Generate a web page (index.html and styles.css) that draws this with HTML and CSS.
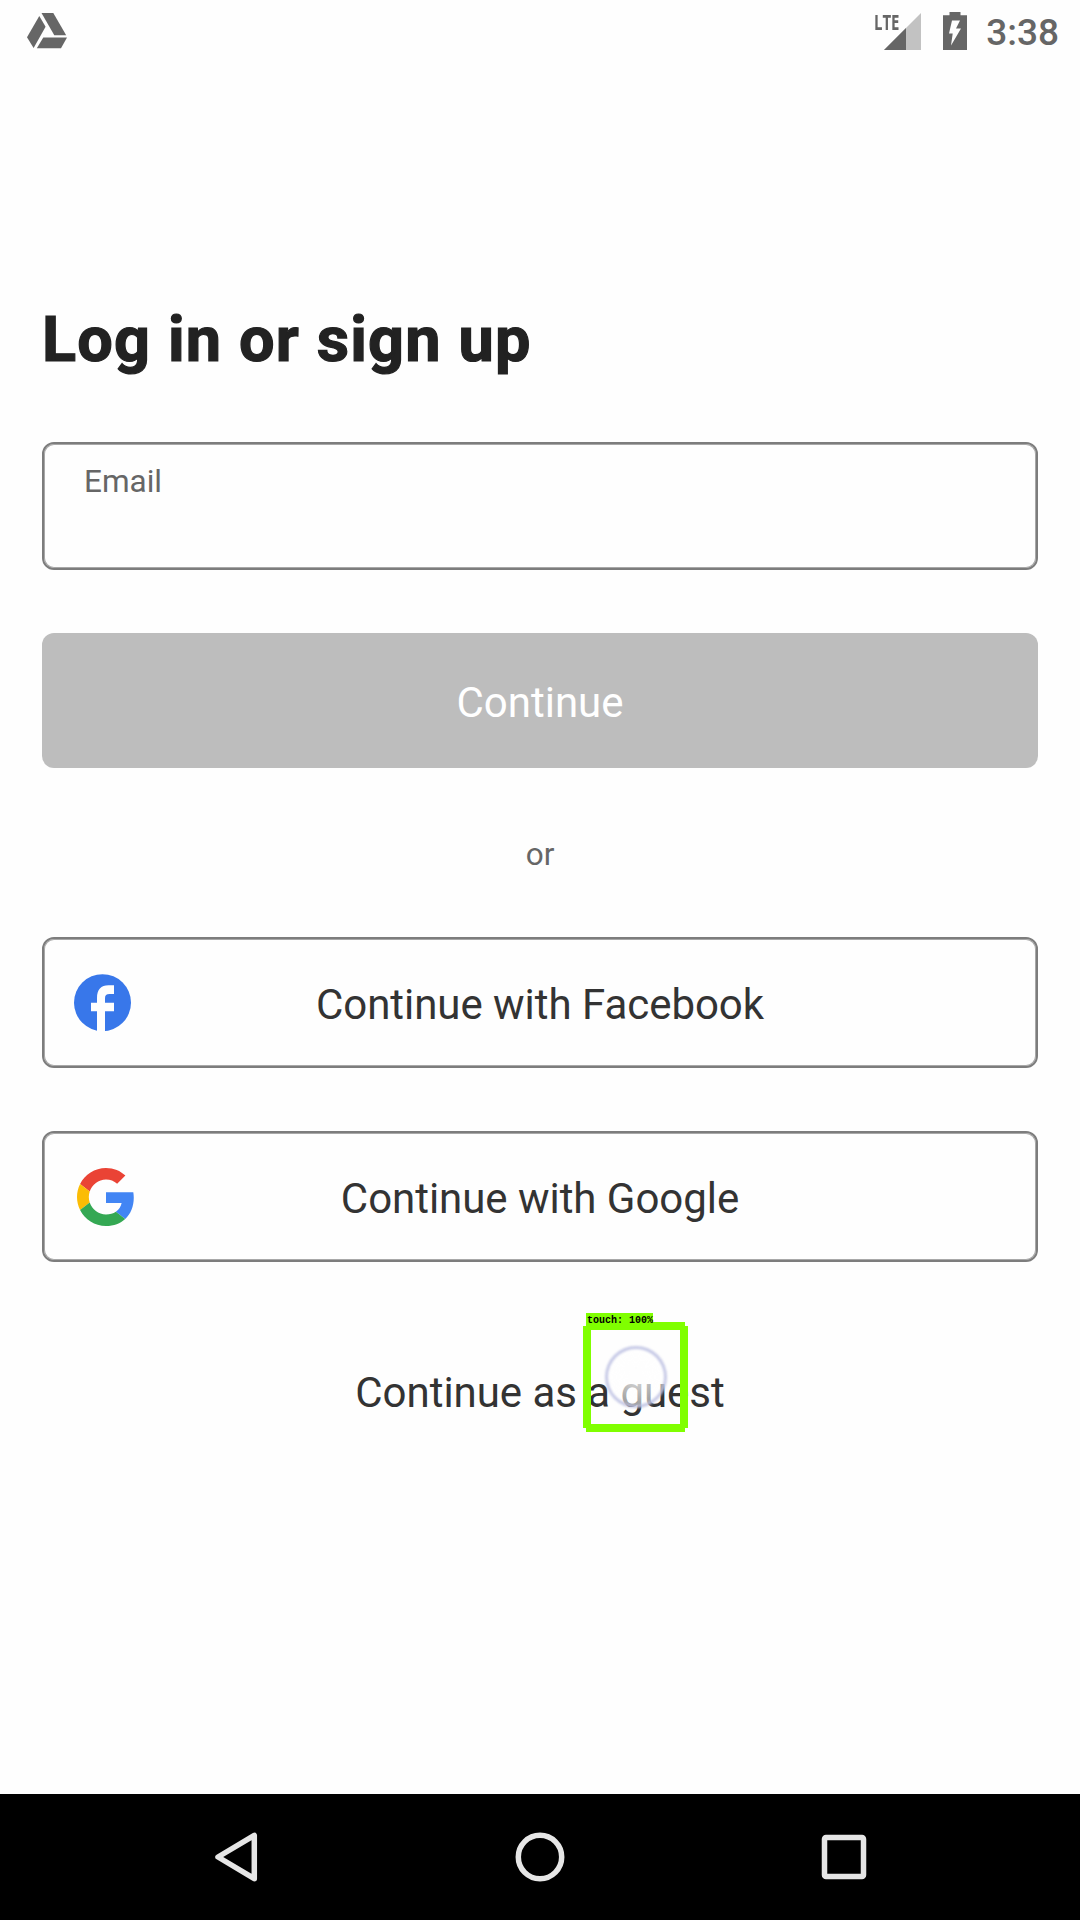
FILE: index.html
```html
<!DOCTYPE html>
<html lang="en">
<head>
<meta charset="utf-8">
<title>Log in or sign up</title>
<link rel="stylesheet" href="styles.css">
</head>
<body>
<div class="screen">
  <header class="status">
    <svg class="drive" width="40" height="36" viewBox="0 0 40 36" fill="#666"><path d="M14.5 0H26.3L39.2 22.3H27.3Z"/><path d="M12.3 3L18.6 13.8L6.6 35L0 24.3Z"/><path d="M16.3 24.5H40L34 35.3H9.8Z"/></svg>
    <div class="status-right">
      <div class="signal">
        <svg width="37" height="37" viewBox="0 0 37 37"><path d="M37 0V37H0Z" fill="#c2c2c2"/><path d="M22 15V37H0Z" fill="#666"/></svg>
        <span class="lte">LTE</span>
      </div>
      <svg class="battery" width="24" height="38" viewBox="0 0 24 38"><path d="M0 3.3H6.5V0H17.5V3.3H24V38H0Z" fill="#666"/><path d="M9 8.5H17L13 16.5H18L8 33.5L9.7 21.5H6Z" fill="#fefefe"/></svg>
      <span class="clock">3:38</span>
    </div>
  </header>
  <main class="form">
    <h1 class="title">Log in or sign up</h1>
    <div class="outlined email"><span>Email</span></div>
    <div class="primary">Continue</div>
    <div class="or">or</div>
    <div class="outlined social facebook">
      <svg class="logo" width="57" height="58" viewBox="0 0 57 58"><circle cx="28.5" cy="28.7" r="28.5" fill="#3877ea"/><path d="M23 58V37.3H17V28.7H23V24C23 15.5 27 11.3 34.5 11.3H40V20H35.5C32.3 20 31 21.3 31 24.3V28.7H40V37.3H31V58Z" fill="#fefefe"/></svg>
      <span>Continue with Facebook</span>
    </div>
    <div class="outlined social google">
      <svg class="logo" width="58" height="58" viewBox="0 0 48 48"><path fill="#ea4335" d="M24 9.5c3.54 0 6.71 1.22 9.21 3.6l6.85-6.85C35.9 2.38 30.47 0 24 0 14.62 0 6.51 5.38 2.56 13.22l7.98 6.19C12.43 13.72 17.74 9.5 24 9.5z"/><path fill="#4285f4" d="M46.98 24.55c0-1.57-.15-3.09-.38-4.55H24v9.02h12.94c-.58 2.96-2.26 5.48-4.78 7.18l7.73 6c4.51-4.18 7.09-10.36 7.09-17.65z"/><path fill="#fbbc05" d="M10.53 28.59c-.48-1.45-.76-2.99-.76-4.59s.27-3.14.76-4.59l-7.98-6.19C.92 16.46 0 20.12 0 24c0 3.88.92 7.54 2.56 10.78l7.97-6.19z"/><path fill="#34a853" d="M24 48c6.48 0 11.93-2.13 15.89-5.81l-7.73-6c-2.15 1.45-4.92 2.3-8.16 2.3-6.26 0-11.57-4.22-13.47-9.91l-7.98 6.19C6.51 42.62 14.62 48 24 48z"/></svg>
      <span>Continue with Google</span>
    </div>
    <div class="guest">Continue as a guest</div>
  </main>
  <nav class="navbar">
    <svg width="50" height="50" viewBox="0 0 50 50"><path d="M43.3 3.3V46.7L7 25Z"/></svg>
    <svg width="50" height="50" viewBox="0 0 50 50"><circle cx="25" cy="25" r="21.7"/></svg>
    <svg width="50" height="50" viewBox="0 0 50 50"><rect x="5.5" y="5.5" width="39" height="39" rx="1.5"/></svg>
  </nav>
  <div class="touch-dot"></div>
  <div class="touch-box">
    <svg width="105" height="110" viewBox="0 0 105 110" fill="#80ff00"><path d="M3 0H102V4H105V106H102V110H3V106H0V4H3ZM8 8V102H97V8Z" fill-rule="evenodd"/></svg>
    <span class="touch-label">touch: 100%</span>
  </div>
</div>
</body>
</html>
```
FILE: styles.css
```css
* { box-sizing: border-box; }
body {
  margin: 0;
  background: #fefefe;
  font-family: Roboto, sans-serif;
}
.screen {
  position: relative;
  display: flex;
  flex-direction: column;
  width: 1080px;
  height: 1920px;
  overflow: hidden;
}
svg { display: block; flex: none; }
.status {
  display: flex;
  justify-content: space-between;
  height: 72px;
  padding: 13px 21px 0 27px;
  color: #666;
}
.status-right { display: flex; }
.signal { position: relative; margin-right: 22px; }
.lte {
  position: absolute;
  left: -10px;
  top: 0;
  font: 700 22px/17px "Open Sans", sans-serif;
  transform: scaleX(.68);
  transform-origin: left;
}
.battery { margin: -1px 19px 0 0; }
.clock {
  font-size: 37px;
  font-weight: 500;
  line-height: 40px;
}
.form {
  flex: 1;
  display: flex;
  flex-direction: column;
  padding: 228px 42px 0;
  color: #333;
  font-size: 42px;
}
.title {
  margin: 0 0 62px;
  color: #222;
  font-size: 63px;
  font-weight: 700;
  letter-spacing: 1.15px;
  line-height: 80px;
  white-space: nowrap;
  -webkit-text-stroke: 1.2px #222;
}
.outlined {
  border: 2px solid #7d7d7d;
  border-radius: 12px;
  box-shadow: inset 0 0 0 1px #a8a8a8;
}
.email {
  height: 128px;
  padding: 18px 40px;
  color: #666;
  font-size: 31.5px;
  line-height: 40px;
}
.primary {
  height: 135px;
  margin-top: 63px;
  padding-top: 4px;
  border-radius: 12px;
  background: #bdbdbd;
  color: #fff;
  line-height: 131px;
  text-align: center;
}
.or {
  margin: 67px 0 62px;
  color: #666;
  font-size: 31.5px;
  line-height: 40px;
  text-align: center;
}
.social {
  display: grid;
  grid-template-columns: 1fr auto 1fr;
  align-items: center;
  height: 131px;
}
.social span { padding-top: 4px; letter-spacing: -.04px; }
.logo { margin-left: 30px; margin-top: 1px; }
.google { margin-top: 63px; }
.google .logo { margin-left: 33px; }
.guest {
  margin-top: 101px;
  letter-spacing: -.04px;
  line-height: 60px;
  text-align: center;
}
.navbar {
  display: flex;
  justify-content: space-between;
  height: 126px;
  padding: 38px 211px;
  background: #000;
}
.navbar svg {
  fill: none;
  stroke: #e6e6e6;
  stroke-width: 5.5;
  stroke-linejoin: round;
}
.touch-dot {
  position: absolute;
  left: 605px;
  top: 1346px;
  width: 62px;
  height: 62px;
  border: 3px solid rgba(184, 187, 224, .8);
  border-radius: 50%;
  background: radial-gradient(rgba(254, 254, 254, .75) 20%, rgba(254, 254, 254, .4));
  filter: blur(.8px);
}
.touch-box {
  position: absolute;
  left: 583px;
  top: 1322px;
}
.touch-label {
  position: absolute;
  left: 3px;
  top: -9px;
  width: 67px;
  height: 12px;
  padding-left: 1px;
  background: #80ff00;
  color: #000;
  font: 700 10px/15px "Liberation Mono", monospace;
  white-space: nowrap;
}
```
